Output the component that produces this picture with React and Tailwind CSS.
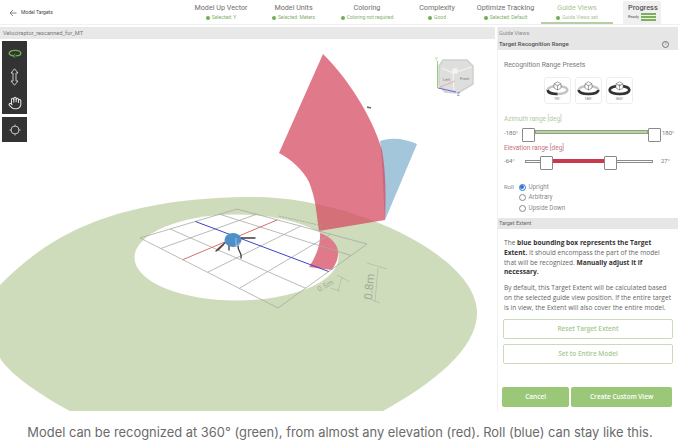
import React from "react";
import { Hand } from "lucide-react";

const TABS = [
  { title: "Model Up Vector", sub: "Selected: Y", w: "w-[72px]" },
  { title: "Model Units", sub: "Selected: Meters", w: "w-[73px]" },
  { title: "Coloring", sub: "Coloring not required", w: "w-[74px]" },
  { title: "Complexity", sub: "Good", w: "w-[66px]" },
  { title: "Optimize Tracking", sub: "Selected: Default", w: "w-[71px]" },
  { title: "Guide Views", sub: "Guide Views set", w: "w-[72px]", active: true },
];

// grid corners of the floor, in page coordinates
const L = [140, 238];
const T = [237, 209];
const R = [367, 244];
const B = [278, 308];
const S_LINES = [0, 0.15, 0.49, 0.72, 1];
const T_LINES = [0, 0.31, 0.82, 1];

function pt(s, t) {
  const x = (1 - s) * (1 - t) * L[0] + s * (1 - t) * B[0] + (1 - s) * t * T[0] + s * t * R[0];
  const y = (1 - s) * (1 - t) * L[1] + s * (1 - t) * B[1] + (1 - s) * t * T[1] + s * t * R[1];
  return [x, y];
}

function GridLine({ a, b, ...rest }) {
  return <line x1={a[0]} y1={a[1]} x2={b[0]} y2={b[1]} {...rest} />;
}

function Scene() {
  return (
    <svg viewBox="0 39 495 372" className="absolute inset-0 h-full w-full">
      {/* azimuth */}
      <path
        d="M0 285C40 245 100 197 255 197C350 197 477 255 477 313C477 350 430 385 383 411L70 411C45 398 10 375 0 358Z"
        fill="#cfdcbc"
      />
      <ellipse cx="236.5" cy="257.5" rx="102" ry="43" fill="#fff" />

      {/* roll */}
      <path d="M380 141C393 137 405 139 417 144L385 220C383 195 383 165 380 141Z" fill="#a3c6da" />
      {/* elevation */}
      <path
        d="M323 54C345 75 372 115 382 150C386 172 386 200 385 220L319 231C316 210 316 200 309 182C303 170 292 160 279 153Z"
        fill="#d4465e"
        fillOpacity="0.72"
      />
      <path d="M320 233C332 237 339 246 338 254C338 260 335 265 332 270L309 267C315 258 321 245 320 233Z" fill="#e07a8b" />
      <path d="M367 107L371 108" stroke="#666" strokeWidth="1.5" />

      {S_LINES.map((s) => (
        <GridLine key={s} a={pt(s, 0)} b={pt(s, 1)} stroke="#a9a9a5" strokeWidth="0.8" />
      ))}
      {T_LINES.map((t) => (
        <GridLine key={t} a={pt(0, t)} b={pt(1, t)} stroke="#a9a9a5" strokeWidth="0.8" />
      ))}
      <GridLine a={pt(0.31, 0)} b={pt(0.31, 1)} stroke="#d9706c" strokeWidth="1" />
      <GridLine a={pt(0, 0.57)} b={pt(1, 0.57)} stroke="#3e43c8" strokeWidth="1" />
      <line x1="279" y1="216" x2="323" y2="226" stroke="#9aa294" strokeWidth="0.8" strokeDasharray="2 1" />

      {/* dimensions */}
      <g stroke="#aab3a0" strokeWidth="0.6">
        <line x1="378" y1="268" x2="375" y2="302" />
        <line x1="367" y1="263" x2="387" y2="269" />
        <line x1="365" y1="297" x2="380" y2="303" />
        <line x1="342" y1="277" x2="338" y2="291" />
        <line x1="337" y1="275" x2="350" y2="282" />
        <line x1="330" y1="288" x2="340" y2="291" />
      </g>
      <text transform="translate(372 300) rotate(-85)" fontSize="11.5" fill="#a3ab9a" fontFamily="Roboto, sans-serif">0.8m</text>
      <text transform="translate(319 292) rotate(-28)" fontSize="7.5" fill="#a3ab9a" fontFamily="Roboto, sans-serif">0.5m</text>

      {/* model */}
      <g fill="none" stroke="#3b3b3b" strokeWidth="1.3" strokeLinecap="round">
        <path d="M240 238L255 238" />
        <path d="M226 242L219 248L216 251" />
        <path d="M223 245L218 250" stroke="#6b4a44" strokeWidth="1.6" />
        <path d="M229 245L229 250" />
        <path d="M238 246C238 252 242 252 241 258" />
      </g>
      <ellipse cx="233" cy="240" rx="8.5" ry="7" fill="#4f8fc7" />
      <path d="M236 238L236 246L241 242" fill="none" stroke="#dbe8f2" strokeWidth="0.6" />

      {/* view cube */}
      <path
        d="M443 60L467 60L473 66L473 84L458 93L445 92L439 85L439 66Z"
        fill="#dededc"
        stroke="#cfcfcd"
        strokeWidth="1.5"
        strokeLinejoin="round"
      />
      <path d="M442 68L453 73L454 90M453 73L472 67" fill="none" stroke="#f2f2f2" strokeWidth="1.2" />
      <circle cx="455" cy="71" r="3" fill="#f2f2f2" />
      <text x="443" y="81" fontSize="4" fill="#777" fontFamily="Roboto, sans-serif">Left</text>
      <text x="460" y="80" fontSize="4" fill="#777" fontFamily="Roboto, sans-serif">Front</text>
      <line x1="437.5" y1="61" x2="437.5" y2="88" stroke="#8fd07c" strokeWidth="1" />
      <line x1="438" y1="88" x2="456" y2="92" stroke="#6a6fd8" strokeWidth="1.2" />
      <line x1="438" y1="88" x2="455" y2="81" stroke="#e59a9a" strokeWidth="0.7" />
      <text x="435" y="61" fontSize="4.5" fill="#8fd07c" fontFamily="Roboto, sans-serif">Y</text>
      <text x="457" y="96" fontSize="4.5" fill="#6a6fd8" fontFamily="Roboto, sans-serif">Z</text>
    </svg>
  );
}

function ToolPalette() {
  return (
    <div className="absolute left-[2px] top-[2px] flex flex-col gap-[3px]">
      <div className="flex h-[73px] w-[25px] flex-col items-center justify-between bg-[#333333] pb-[4px] pt-[8px]">
        <svg width="14" height="9" viewBox="0 0 14 9" fill="none" stroke="#6fb04f" strokeWidth="1.4">
          <path d="M5 6.8C2.8 6.4 1.2 5.5 1.2 4.2C1.2 2.6 3.8 1.4 7 1.4C10.2 1.4 12.8 2.6 12.8 4.2C12.8 5.6 10.6 6.8 7.5 6.9" />
          <path d="M7.2 5L5 6.9L7.2 8.6" strokeWidth="1" />
        </svg>
        <svg width="9" height="18" viewBox="0 0 9 18" fill="none" stroke="#d8d8d8" strokeWidth="0.9">
          <path d="M4.5 0.8L8 5H6V13H8L4.5 17.2L1 13H3V5H1Z" />
        </svg>
        <Hand size={14} color="#e4e4e4" strokeWidth={1.8} />
      </div>
      <div className="flex h-[25px] w-[25px] items-center justify-center bg-[#333333]">
        <svg width="12" height="12" viewBox="0 0 12 12" fill="none" stroke="#cfcfcf" strokeWidth="0.9">
          <circle cx="6" cy="6" r="4" />
          <path d="M6 0.5V2.5M6 9.5V11.5M0.5 6H2.5M9.5 6H11.5" />
        </svg>
      </div>
    </div>
  );
}

function PresetIcon({ label, arc }) {
  return (
    <div className="flex h-[27px] w-[27px] flex-col items-center justify-center rounded-[3px] border border-[#eeeeee]">
      <svg width="23" height="15" viewBox="0 0 23 15" fill="none">
        <ellipse cx="11.5" cy="9" rx="9.8" ry="4" stroke="#c4c4c4" strokeWidth="2.4" />
        <path d={arc} stroke="#333333" strokeWidth="2.6" />
        <path d="M11.5 0.8L15 2.8V7L11.5 9L8 7V2.8ZM8 2.8L11.5 4.8L15 2.8M11.5 4.8V9" fill="#fff" stroke="#666" strokeWidth="0.6" />
      </svg>
      <span className="text-[4px] leading-[5px] text-[#777777]">{label}</span>
    </div>
  );
}

function Radio({ label, checked }) {
  return (
    <div className="flex h-[10.5px] items-center gap-[3px]">
      <span
        className={`flex h-[7px] w-[7px] items-center justify-center rounded-full border ${
          checked ? "border-[#2f74d0]" : "border-[#8a8a8a]"
        }`}
      >
        {checked && <span className="h-[4px] w-[4px] rounded-full bg-[#2f74d0]" />}
      </span>
      <span className="text-[6.3px] text-[#8a8a8a]">{label}</span>
    </div>
  );
}

function Handle() {
  return <div className="z-10 h-[14px] w-[13px] shrink-0 rounded-[1px] border border-[#8a8a8a] bg-white" />;
}

export default function App() {
  return (
    <div
      className="flex h-[441px] w-[680px] flex-col overflow-hidden bg-white"
      style={{ fontFamily: "Roboto, sans-serif" }}
    >
      {/* top nav */}
      <div className="flex h-[25px] shrink-0 border-b border-[#f0f0f0]">
        <div className="flex w-[185px] items-center pl-[9px] pt-[1px]">
          <svg width="8" height="8" viewBox="0 0 8 8" fill="none" stroke="#555" strokeWidth="0.7">
            <path d="M7.5 4H1M4 1L1 4L4 7" />
          </svg>
          <span className="ml-[4px] text-[5px] text-[#444444]">Model Targets</span>
        </div>
        {TABS.map((tab) => (
          <div
            key={tab.title}
            className={`flex ${tab.w} flex-col items-center pt-[3px] ${tab.active ? "border-b-2 border-[#b5cfa3]" : ""}`}
          >
            <span className={`whitespace-nowrap text-[7.2px] leading-[9px] ${tab.active ? "text-[#a9c596]" : "text-[#6e6e6e]"}`}>
              {tab.title}
            </span>
            <span className={`mt-[2px] flex items-center gap-[2px] whitespace-nowrap text-[5px] leading-[7px] ${tab.active ? "text-[#a9c596]" : "text-[#7fb069]"}`}>
              <span className="h-[4px] w-[4px] rounded-full bg-[#6fae57]" />
              {tab.sub}
            </span>
          </div>
        ))}
        <div className="ml-[10px] mt-[1px] flex h-[23px] w-[38px] flex-col rounded-[1px] bg-[#f0f0f0] px-[5px] pt-[3px]">
          <span className="whitespace-nowrap text-[7.4px] font-medium leading-[8px] text-[#555555]">Progress</span>
          <div className="mt-[1px] flex items-center justify-between">
            <span className="text-[4px] text-[#555555]">Ready</span>
            <div className="flex flex-col gap-[1px]">
              <div className="h-[2px] w-[15px] bg-[#7cb05c]" />
              <div className="h-[2px] w-[15px] bg-[#7cb05c]" />
              <div className="h-[2px] w-[15px] bg-[#7cb05c]" />
            </div>
          </div>
        </div>
      </div>

      <div className="mt-[2px] flex h-[384px] shrink-0">
        {/* viewport */}
        <div className="flex w-[495px] flex-col">
          <div className="flex h-[12px] shrink-0 items-center bg-[#e8e8e8] pl-[3px] text-[5.7px] text-[#777777]">
            Velociraptor_rescanned_for_MT
          </div>
          <div className="relative flex-1">
            <Scene />
            <ToolPalette />
          </div>
        </div>

        {/* right panel */}
        <div className="ml-[2px] flex w-[181px] flex-col border-l border-[#f0f0f0]">
          <div className="flex h-[23px] shrink-0 flex-col bg-[#e6e6e6] pl-[1px] pr-[9px]">
            <span className="mt-[3px] text-[5.5px] leading-[7px] text-[#8a8a8a]">Guide Views</span>
            <div className="mt-[3px] flex items-center justify-between">
              <span className="text-[6px] font-bold leading-[8px] text-[#666666]">Target Recognition Range</span>
              <span className="flex h-[7px] w-[7px] items-center justify-center rounded-full border border-[#777777] text-[5px] text-[#777777]">i</span>
            </div>
          </div>

          <div className="flex h-[168px] shrink-0 flex-col px-[6px]">
            <span className="mt-[11px] text-[6.8px] leading-[8px] text-[#7a7a7a]">Recognition Range Presets</span>
            <div className="mt-[8px] flex justify-center gap-[4px] pl-[1px]">
              <PresetIcon label="90°" arc="M1.7 9C2 12 7 13 11.5 13" />
              <PresetIcon label="180°" arc="M1.7 9C1.7 11.5 6 13 11.5 13C17 13 21.3 11.5 21.3 9" />
              <PresetIcon label="360°" arc="M1.7 9C1.7 3.7 21.3 3.7 21.3 9C21.3 14.3 1.7 14.3 1.7 9Z" />
            </div>
            <span className="mt-[11px] text-[6.5px] leading-[8px] text-[#b3c89f]">Azimuth range [deg]</span>
            <div className="-mr-[6px] mt-[5px] flex h-[14px] items-start">
              <span className="w-[18px] whitespace-nowrap text-[6px] leading-[9px] text-[#777777]">-180°</span>
              <Handle />
              <div className="mt-[2px] h-[4px] flex-1 border border-[#8aa67a] bg-[#b8d0a3]" />
              <Handle />
              <span className="w-[17px] pl-[1px] text-[6px] leading-[9px] text-[#777777]">180°</span>
            </div>
            <span className="mt-[2px] text-[6.5px] leading-[8px] text-[#c4727f]">Elevation range [deg]</span>
            <div className="-mr-[6px] mt-[4px] flex h-[15px] items-start">
              <span className="w-[21px] text-[6px] leading-[10px] text-[#777777]">-64°</span>
              <div className="mt-[4px] h-[3px] w-[15px] rounded-l-[1px] border border-r-0 border-[#8a8a8a]" />
              <Handle />
              <div className="mt-[3px] h-[4px] w-[51px] bg-[#c8394e]" />
              <Handle />
              <div className="mt-[4px] h-[3px] w-[36px] rounded-r-[1px] border border-l-0 border-[#8a8a8a]" />
              <span className="ml-[8px] text-[6px] leading-[10px] text-[#777777]">27°</span>
            </div>
            <div className="mt-[11px] flex">
              <span className="w-[14.5px] text-[6px] leading-[10px] text-[#8a8a8a]">Roll</span>
              <div className="flex flex-col">
                <Radio label="Upright" checked />
                <Radio label="Arbitrary" />
                <Radio label="Upside Down" />
              </div>
            </div>
          </div>

          <div className="flex h-[11px] shrink-0 items-center bg-[#e6e6e6] pl-[1px] text-[5.5px] text-[#666666]">
            Target Extent
          </div>

          <div
            className="flex flex-1 flex-col px-[6px] text-[6.6px] leading-[9.8px] text-[#666666]"
            style={{ fontFamily: "'Open Sans', sans-serif" }}
          >
            <p className="mt-[9px] w-[166px]">
              The <b className="text-[#333333]">blue bounding box represents the Target Extent.</b> It should encompass the part of the model that will be recognized. <b className="text-[#333333]">Manually adjust it if necessary.</b>
            </p>
            <p className="mt-[6px] w-[172px]">
              By default, this Target Extent will be calculated based on the selected guide view position. If the entire target is in view, the Extent will also cover the entire model.
            </p>
            <button className="-ml-[1px] mt-[6px] flex h-[20px] w-[170px] shrink-0 items-center justify-center rounded-[2px] border border-[#c9dcba] text-[6.5px] font-semibold text-[#a6c98e]">
              Reset Target Extent
            </button>
            <button className="-ml-[1px] mt-[5px] flex h-[20px] w-[170px] shrink-0 items-center justify-center rounded-[2px] border border-[#c9dcba] text-[6.5px] font-semibold text-[#a6c98e]">
              Set to Entire Model
            </button>
            <div className="-ml-[2px] mt-[23px] flex gap-[2px]">
              <button className="h-[20px] w-[68px] rounded-[2px] bg-[#9bc878] text-[6.5px] font-semibold text-white">Cancel</button>
              <button className="h-[20px] w-[102px] rounded-[2px] bg-[#9bc878] text-[6.5px] font-semibold text-white">Create Custom View</button>
            </div>
          </div>
        </div>
      </div>

      {/* caption */}
      <div className="flex flex-1 items-center justify-center pt-[12px] text-[12.9px] text-[#6b6b6b]" style={{ fontFamily: "Inter, sans-serif" }}>
        Model can be recognized at 360° (green), from almost any elevation (red). Roll (blue) can stay like this.
      </div>
    </div>
  );
}
